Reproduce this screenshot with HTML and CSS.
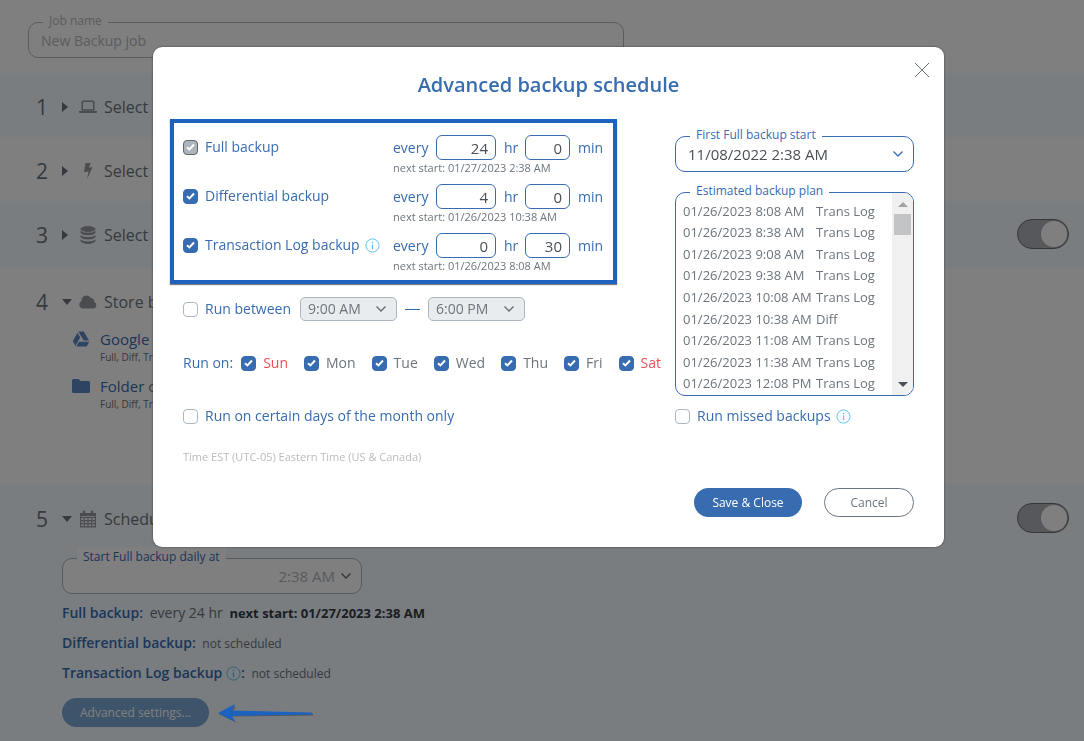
FILE: index.html
```html
<!DOCTYPE html>
<html lang="en">
<head>
    <meta charset="UTF-8">
    <meta name="viewport" content="width=device-width, initial-scale=1.0">
    <title>Advanced backup schedule</title>
    <link rel="stylesheet" href="styles.css">
</head>
<body>
    <main class="page">
        <div class="job">
            <div class="field job-field">
                <label for="job-name">Job name</label>
                <input type="text" id="job-name" value="New Backup job">
            </div>
        </div>

        <section class="step step-tinted">
            <div class="step-head">
                <span class="num">1</span>
                <span class="caret"></span>
                <svg class="icon" viewBox="0 0 18 16"><path fill="none" stroke="currentColor" stroke-width="1.5" d="M3.2 11V3q0-.8.8-.8h10q.8 0 .8.8v8z"/><path fill="currentColor" d="M0 12h18v1q0 1-1.200 1H1.200Q0 14 0 13z"/></svg>
                <span>Select</span>
            </div>
        </section>

        <section class="step">
            <div class="step-head">
                <span class="num">2</span>
                <span class="caret"></span>
                <svg class="icon" viewBox="0 0 18 16"><path fill="currentColor" d="M6.500 0h5.200L9.800 4.800l3.700-.9L8.200 16 9.500 8.200l-4.500 1z"/></svg>
                <span>Select</span>
            </div>
        </section>

        <section class="step step-tinted step-source">
            <div class="step-head">
                <span class="num">3</span>
                <span class="caret"></span>
                <svg class="icon icon-tall" viewBox="0 0 18 18"><g fill="currentColor"><ellipse cx="9" cy="3" rx="7.500" ry="3"/><path d="M1.500 4.600q2 2.200 7.500 2.200t7.500-2.200v2.200q-1.500 2.500-7.500 2.500T1.500 6.800zM1.500 8.900q2 2.200 7.500 2.200t7.500-2.200v2.200q-1.500 2.500-7.500 2.500t-7.500-2.500zM1.500 13.200q2 2.200 7.500 2.200t7.500-2.200v1.900Q15 17.900 9 17.900t-7.500-2.800z"/></g></svg>
                <span>Select</span>
            </div>
            <input type="checkbox" class="switch" aria-label="Select databases" checked>
        </section>

        <section class="step step-store">
            <div class="step-head">
                <span class="num">4</span>
                <span class="caret caret-open"></span>
                <svg class="icon" viewBox="0 0 18 16"><path fill="currentColor" d="M4 14.500a4 4 0 0 1-1.500-7.600 5 5 0 0 1 9.300-2.800 3.300 3.300 0 0 1 3.400 3.900 3.400 3.400 0 0 1-.7 6.500z"/></svg>
                <span>Store backups</span>
            </div>
            <div class="store">
                <svg class="icon" viewBox="0 0 18 16"><g fill="currentColor"><path d="M6.300.5h5.400l5.300 9h-5.300z"/><path d="M5.500 1.700 8.200 6.300 3.500 15 .8 10z"/><path d="M7 10.700h10.300L14.600 15.500H4.400z"/></g></svg>
                <div>
                    <div class="store-name">Google Drive</div>
                    <div class="store-note">Full, Diff, Trans Log</div>
                </div>
            </div>
            <div class="store">
                <svg class="icon" viewBox="0 0 18 16"><path fill="currentColor" d="M1.500 1h5l2 2h8q1.500 0 1.500 1.500v9q0 1.500-1.500 1.500h-15Q0 15 0 13.500v-11Q0 1 1.500 1z"/></svg>
                <div>
                    <div class="store-name">Folder <span class="store-path">c:\backups</span></div>
                    <div class="store-note">Full, Diff, Trans Log</div>
                </div>
            </div>
        </section>

        <section class="step step-tinted step-schedule">
            <div class="step-head">
                <span class="num">5</span>
                <span class="caret caret-open"></span>
                <svg class="icon icon-tall" viewBox="0 0 18 18"><path fill="none" stroke="currentColor" stroke-width="1.200" d="M1.600 3.600h14.800v13.200H1.600zM1.600 7.500h14.800M1.600 10.600h14.800M1.600 13.700h14.800M5.300 7.500v9.300M9 7.500v9.300M12.700 7.500v9.300"/><path fill="currentColor" d="M1.600 3.600h14.800v2.600H1.600z"/><path fill="none" stroke="currentColor" stroke-width="2.400" stroke-linecap="round" d="M5 1.800v2.400M13 1.800v2.400"/></svg>
                <span>Schedule backups</span>
            </div>
            <input type="checkbox" class="switch" aria-label="Schedule backups" checked>
            <div class="schedule">
                <div class="field start-field">
                    <label for="start-at">Start Full backup daily at</label>
                    <select id="start-at" disabled><option>2:38 AM</option></select>
                </div>
                <p><b>Full backup:</b> <span class="val">every 24 hr</span> <strong>next start: 01/27/2023 2:38 AM</strong></p>
                <p><b>Differential backup:</b> <span class="none">not scheduled</span></p>
                <p><b>Transaction Log backup</b> <svg class="info" viewBox="0 0 16 16"><circle cx="8" cy="8" r="7" fill="none" stroke="currentColor"/><path stroke="currentColor" stroke-width="1.300" d="M8 7v5M8 4v1.500"/></svg><b>:</b> <span class="none">not scheduled</span></p>
                <div class="schedule-actions">
                    <button type="button" class="btn btn-soft">Advanced settings...</button>
                    <svg class="pointer" viewBox="0 0 96 20"><path fill="#333" opacity=".5" d="M1 11 18 3l-4 7 81 .5v2L14 13.500l4 6z"/><path fill="#1e62c0" d="M0 10 17 1l-3 6.500 80 2v2L14 13l3 6z"/></svg>
                </div>
            </div>
        </section>
    </main>

    <div class="overlay">
        <form class="modal" role="dialog" aria-labelledby="modal-title">
            <button type="button" class="close" aria-label="Close"><svg viewBox="0 0 16 16"><path fill="none" stroke="currentColor" stroke-width="1" d="M1 1l14 14M15 1 1 15"/></svg></button>
            <h1 id="modal-title">Advanced backup schedule</h1>

            <div class="columns">
                <div class="settings">
                    <div class="types">
                        <div class="type">
                            <label class="check"><input type="checkbox" checked disabled> Full backup</label>
                            <div>
                                <div class="period">
                                    <label for="full-hr">every</label>
                                    <input type="text" id="full-hr" class="hr" value="24"> <label for="full-hr">hr</label>
                                    <input type="text" id="full-min" class="min" value="0"> <label for="full-min">min</label>
                                </div>
                                <div class="next">next start: 01/27/2023 2:38 AM</div>
                            </div>
                        </div>
                        <div class="type">
                            <label class="check"><input type="checkbox" checked> Differential backup</label>
                            <div>
                                <div class="period">
                                    <label for="diff-hr">every</label>
                                    <input type="text" id="diff-hr" class="hr" value="4"> <label for="diff-hr">hr</label>
                                    <input type="text" id="diff-min" class="min" value="0"> <label for="diff-min">min</label>
                                </div>
                                <div class="next">next start: 01/26/2023 10:38 AM</div>
                            </div>
                        </div>
                        <div class="type">
                            <label class="check"><input type="checkbox" checked> Transaction Log backup <svg class="info" viewBox="0 0 16 16"><circle cx="8" cy="8" r="7" fill="none" stroke="currentColor"/><path stroke="currentColor" stroke-width="1.300" d="M8 7v5M8 4v1.500"/></svg></label>
                            <div>
                                <div class="period">
                                    <label for="log-hr">every</label>
                                    <input type="text" id="log-hr" class="hr" value="0"> <label for="log-hr">hr</label>
                                    <input type="text" id="log-min" class="min" value="30"> <label for="log-min">min</label>
                                </div>
                                <div class="next">next start: 01/26/2023 8:08 AM</div>
                            </div>
                        </div>
                    </div>

                    <div class="between">
                        <label class="check"><input type="checkbox"> Run between</label>
                        <select aria-label="From" disabled><option>9:00 AM</option></select>
                        <span class="dash"></span>
                        <select aria-label="To" disabled><option>6:00 PM</option></select>
                    </div>

                    <div class="days">
                        <span>Run on:</span>
                        <label class="check weekend"><input type="checkbox" checked> Sun</label>
                        <label class="check"><input type="checkbox" checked> Mon</label>
                        <label class="check"><input type="checkbox" checked> Tue</label>
                        <label class="check"><input type="checkbox" checked> Wed</label>
                        <label class="check"><input type="checkbox" checked> Thu</label>
                        <label class="check"><input type="checkbox" checked> Fri</label>
                        <label class="check weekend"><input type="checkbox" checked> Sat</label>
                    </div>

                    <label class="check month"><input type="checkbox"> Run on certain days of the month only</label>
                    <div class="zone">Time EST (UTC-05) Eastern Time (US &amp; Canada)</div>
                </div>

                <div class="plan">
                    <div class="field first-field">
                        <label for="first-start">First Full backup start</label>
                        <select id="first-start"><option>11/08/2022 2:38 AM</option></select>
                    </div>
                    <div class="field plan-field">
                        <span class="field-title" id="plan-title">Estimated backup plan</span>
                        <div class="plan-scroll">
                            <table aria-labelledby="plan-title">
                                <tr><td>01/26/2023 8:08 AM</td><td>Trans Log</td></tr>
                                <tr><td>01/26/2023 8:38 AM</td><td>Trans Log</td></tr>
                                <tr><td>01/26/2023 9:08 AM</td><td>Trans Log</td></tr>
                                <tr><td>01/26/2023 9:38 AM</td><td>Trans Log</td></tr>
                                <tr><td>01/26/2023 10:08 AM</td><td>Trans Log</td></tr>
                                <tr><td>01/26/2023 10:38 AM</td><td>Diff</td></tr>
                                <tr><td>01/26/2023 11:08 AM</td><td>Trans Log</td></tr>
                                <tr><td>01/26/2023 11:38 AM</td><td>Trans Log</td></tr>
                                <tr><td>01/26/2023 12:08 PM</td><td>Trans Log</td></tr>
                            </table>
                            <div class="bar">
                                <span class="bar-up"></span>
                                <span class="bar-thumb"></span>
                                <span class="bar-down"></span>
                            </div>
                        </div>
                    </div>
                    <label class="check missed"><input type="checkbox"> Run missed backups <svg class="info" viewBox="0 0 16 16"><circle cx="8" cy="8" r="7" fill="none" stroke="currentColor"/><path stroke="currentColor" stroke-width="1.300" d="M8 7v5M8 4v1.500"/></svg></label>
                </div>
            </div>

            <div class="actions">
                <button type="submit" class="btn btn-save">Save &amp; Close</button>
                <button type="button" class="btn btn-cancel">Cancel</button>
            </div>
        </form>
    </div>
</body>
</html>
```
FILE: styles.css
```css
* {
    box-sizing: border-box;
}
body {
    margin: 0;
    font-family: "Segoe UI", "Open Sans", sans-serif;
    font-size: 14px;
    line-height: 20px;
    color: #6c757d;
    background: #fff;
    height: 100vh;
    overflow: hidden;
}
input, select, button {
    font: inherit;
    color: inherit;
}
h1, p {
    margin: 0;
}

/* fields with a title on the border */
.field {
    position: relative;
    border: 1px solid #386cb0;
    border-radius: 10px;
    background: #fff;
}
.field > label, .field-title {
    position: absolute;
    top: -12px;
    left: 14px;
    padding: 0 6px;
    background: #fff;
    color: #386cb0;
    font-size: 12px;
    z-index: 1;
}
.field > input, .field > select {
    display: block;
    width: 100%;
    height: 34px;
    padding: 0 12px;
    border: none;
    border-radius: 10px;
    background-color: transparent;
}
select {
    appearance: none;
    opacity: 1;
    background: no-repeat right 10px center / 10px 6px url("data:image/svg+xml,%3Csvg xmlns='http://www.w3.org/2000/svg' viewBox='0 0 10 6'%3E%3Cpath fill='none' stroke='%23606a72' stroke-width='1.300' d='M.5.5 5 5 9.500.5'/%3E%3C/svg%3E");
}

/* page */
.job {
    height: 73px;
    padding: 22px 28px 0;
}
.job-field {
    max-width: 596px;
    border-color: #b8b8b8;
}
.job-field > label {
    color: #b8b8b8;
}
.job-field > input {
    color: #b8b8b8;
}
.step {
    position: relative;
    min-height: 64px;
    padding-top: 18px;
}
.step-tinted {
    background: #f2faff;
}
.step-source {
    min-height: 67px;
}
.step-store {
    min-height: 217px;
}
.step-schedule {
    min-height: 256px;
}
.step-head {
    display: flex;
    align-items: center;
    height: 32px;
    padding-left: 36px;
    font-size: 16px;
}
.num {
    width: 26px;
    font-size: 21px;
}
.caret {
    width: 17px;
}
.caret::before {
    content: "";
    display: block;
    width: 0;
    border: 5px solid transparent;
    border-left: 6px solid currentColor;
    border-right: none;
}
.caret-open::before {
    border: 5px solid transparent;
    border-top: 6px solid currentColor;
    border-bottom: none;
}
.icon {
    flex: none;
    width: 18px;
    height: 16px;
    margin-right: 7px;
    color: #94989e;
}
.icon-tall {
    height: 18px;
}
.switch {
    appearance: none;
    position: absolute;
    top: 18px;
    right: 15px;
    width: 52px;
    height: 30px;
    margin: 0;
    padding: 1px;
    border: 1px solid #6c6c74;
    border-radius: 15px;
    background: #adb0b8;
}
.switch::before {
    content: "";
    display: block;
    width: 26px;
    height: 26px;
    margin-left: auto;
    border-radius: 50%;
    background: #fff;
}
.store {
    display: flex;
    align-items: flex-start;
    padding-left: 72px;
    margin-top: 11px;
    color: #386cb0;
}
.store .icon {
    margin: 2px 10px 0 0;
    color: #5a8ac6;
}
.store-name {
    font-size: 15px;
}
.store-path, .store-note {
    color: #6c757d;
}
.store-note {
    font-size: 10px;
    line-height: 16px;
}
.schedule {
    padding: 23px 62px 0;
}
.start-field {
    max-width: 300px;
    margin-bottom: 9px;
    border-color: #adb5bd;
}
.start-field > select {
    padding-right: 26px;
    text-align: right;
    text-align-last: right;
    font-size: 15px;
    color: #adb5bd;
}
.schedule p {
    height: 20px;
    margin-bottom: 10px;
    white-space: nowrap;
}
.schedule b {
    font-weight: 600;
    color: #386cb0;
}
.schedule strong {
    font-size: 13px;
    color: #343a46;
}
.schedule .val, .schedule .none {
    margin: 0 3px;
}
.schedule .none {
    font-size: 12px;
}
.schedule-actions {
    display: flex;
    align-items: center;
    gap: 9px;
    padding-top: 5px;
}
.pointer {
    position: relative;
    z-index: 20;
    width: 96px;
    height: 20px;
}
.info {
    width: 15px;
    height: 15px;
    vertical-align: -3px;
    color: #5bc0f5;
}
.btn {
    height: 29px;
    border: 1px solid transparent;
    border-radius: 15px;
    padding: 0 14px;
    font-size: 12px;
    font-weight: 500;
    white-space: nowrap;
    cursor: pointer;
}
.btn-soft {
    width: 147px;
    background: #7ba8d7;
    color: #fff;
}

/* dialog */
.overlay {
    position: fixed;
    inset: 0;
    z-index: 10;
    display: flex;
    justify-content: center;
    align-items: flex-start;
    padding: 47px 0 0 13px;
    background: rgba(0, 0, 0, 0.5);
}
.modal {
    position: relative;
    width: 100%;
    max-width: 791px;
    padding: 24px 30px 30px;
    border-radius: 9px;
    background: #fff;
    box-shadow: 0 0 2px rgba(0, 0, 0, 0.6);
}
.close {
    position: absolute;
    top: 15px;
    right: 14px;
    width: 16px;
    height: 16px;
    padding: 0;
    border: none;
    background: none;
}
.close svg {
    display: block;
}
h1 {
    font-size: 20px;
    line-height: 28px;
    font-weight: 600;
    text-align: center;
    color: #386cb0;
}
.columns {
    display: flex;
    justify-content: space-between;
    padding-top: 20px;
    color: #386cb0;
}
.check {
    display: flex;
    align-items: center;
    white-space: nowrap;
}
.check input {
    appearance: none;
    flex: none;
    width: 15px;
    height: 15px;
    margin: 0 7px 0 0;
    border: 1px solid #adb5bd;
    border-radius: 4px;
    background: #fff;
}
.check input:checked {
    border-color: #386cb0;
    background: #386cb0 no-repeat center / 9px 8px url("data:image/svg+xml,%3Csvg xmlns='http://www.w3.org/2000/svg' viewBox='0 0 9 8'%3E%3Cpath fill='none' stroke='%23fff' stroke-width='2' d='M1 4.200 3.400 6.400 8 1.500'/%3E%3C/svg%3E");
}
.check input:checked:disabled {
    border-color: #666;
    background-color: #adb5bd;
}
.check .info {
    margin-left: 5px;
}
.types {
    width: 447px;
    margin-left: -13px;
    padding: 12px 9px 7px;
    border: 4px solid #1e62c0;
    box-shadow: 0 1px 1px rgba(0, 0, 0, 0.5);
}
.type {
    display: grid;
    grid-template-columns: 210px auto;
    align-items: start;
}
.type + .type {
    margin-top: 9px;
}
.type .check {
    height: 24px;
}
.period {
    display: flex;
    align-items: center;
}
.period label:first-child {
    width: 43px;
}
.period input {
    height: 25px;
    padding: 0 7px;
    border: 1px solid #386cb0;
    border-radius: 6px;
    text-align: right;
    font-size: 15px;
    color: #495057;
}
.period .hr {
    width: 60px;
    margin-right: 8px;
}
.period .min {
    width: 45px;
    margin: 0 8px 0 7px;
}
.period .hr + label {
    width: 14px;
}
.next {
    font-size: 11px;
    line-height: 15px;
    color: #6c757d;
}
.between {
    display: flex;
    align-items: center;
    margin-top: 13px;
}
.between .check {
    width: 117px;
}
.between select {
    width: 97px;
    height: 24px;
    padding: 0 7px;
    border: 1px solid #adb5bd;
    border-radius: 5px;
    background-color: #e9ecef;
    color: #6c757d;
}
.dash {
    width: 15px;
    height: 1px;
    margin: 0 8px;
    background: #386cb0;
}
.days {
    display: flex;
    align-items: center;
    margin-top: 32px;
    white-space: nowrap;
}
.days span {
    margin-right: 8px;
}
.days .check {
    margin-right: 16px;
    color: #6c757d;
}
.days .check:last-child {
    margin-right: 0;
}
.days .weekend {
    color: #e8505b;
}
.month {
    margin-top: 33px;
}
.zone {
    margin-top: 21px;
    font-size: 11px;
    color: #b8bcc0;
}
.plan {
    flex: none;
    width: 239px;
    padding-top: 17px;
}
.first-field > select {
    font-size: 15px;
    color: #495057;
    background-image: url("data:image/svg+xml,%3Csvg xmlns='http://www.w3.org/2000/svg' viewBox='0 0 10 6'%3E%3Cpath fill='none' stroke='%23386cb0' stroke-width='1.300' d='M.5.5 5 5 9.500.5'/%3E%3C/svg%3E");
}
.plan-field {
    margin-top: 20px;
}
.plan-scroll {
    display: flex;
    justify-content: space-between;
    height: 202px;
    overflow: hidden;
    border-radius: 9px;
}
table {
    height: 194px;
    margin: 7px 0 0 7px;
    border-collapse: collapse;
    font-size: 13px;
    color: #6c757d;
    white-space: nowrap;
}
td {
    padding: 0;
}
td:first-child {
    width: 133px;
}
.bar {
    display: flex;
    flex-direction: column;
    align-items: center;
    width: 21px;
    padding: 9px 0 8px;
    background: #f0f0f0;
}
.bar-up, .bar-down {
    border: 5px solid transparent;
    border-top: none;
    border-bottom: 5px solid #a0a4a8;
}
.bar-down {
    margin-top: auto;
    border-top: 5px solid #495057;
    border-bottom: none;
}
.bar-thumb {
    width: 17px;
    height: 21px;
    margin-top: 7px;
    background: #c1c3c5;
}
.missed {
    margin-top: 10px;
}
.actions {
    display: flex;
    justify-content: flex-end;
    gap: 22px;
    margin-top: 21px;
}
.btn-save {
    width: 108px;
    background: #386cb0;
    color: #fff;
}
.btn-cancel {
    width: 90px;
    border-color: #6c757d;
    background: #fff;
    font-weight: 400;
}
```
